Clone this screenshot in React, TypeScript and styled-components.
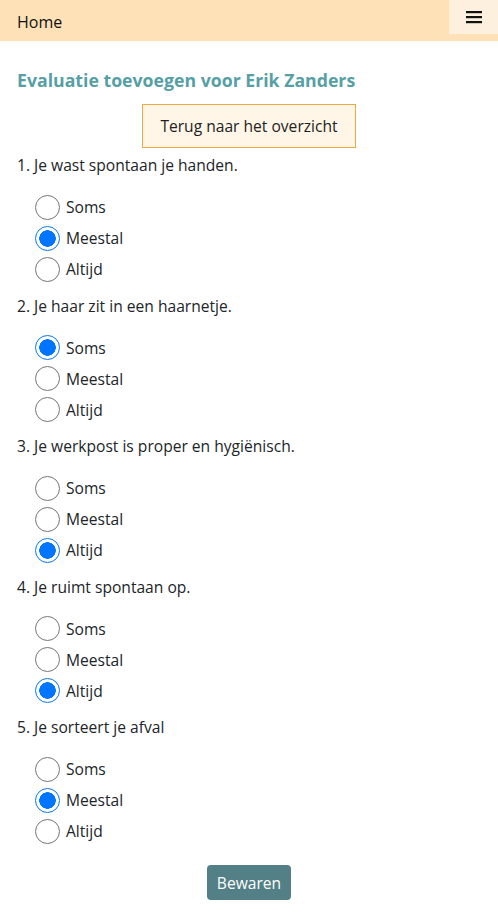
import React, { useState } from "react";
import styled, { createGlobalStyle } from "styled-components";

const Global = createGlobalStyle`
  html, body { margin: 0; padding: 0; background: #fff; }
  body { font-family: "Open Sans", "Noto Sans", sans-serif; color: #212529; font-size: 15.6px; }
  * { box-sizing: border-box; }
`;

const NavBar = styled.nav`
  display: flex;
  align-items: flex-start;
  justify-content: space-between;
  height: 41px;
  background: #ffe1b8;
`;

const NavLink = styled.a`
  padding: 12px 0 0 17px;
  font-size: 16px;
  line-height: 20px;
  color: #111;
  text-decoration: none;
`;

const MenuButton = styled.button`
  width: 49px;
  height: 34px;
  border: none;
  background: #fdf0df;
  display: flex;
  align-items: center;
  justify-content: center;
  padding: 0;
`;

const Main = styled.main`
  padding: 27px 17px 20px 17px;
  display: flex;
  flex-direction: column;
`;

const Title = styled.h1`
  margin: 0;
  font-size: 17.7px;
  line-height: 24px;
  font-weight: 700;
  color: #56a0a5;
`;

const BackButton = styled.button`
  align-self: center;
  margin: 12px 0 5px 0;
  height: 44px;
  padding: 0 17px;
  background: #fff6e8;
  border: 1px solid #f0a844;
  font-family: inherit;
  font-size: 15.6px;
  color: #222;
`;

const Question = styled.div`
  display: flex;
  flex-direction: column;
  margin-bottom: 9px;
`;

const QuestionText = styled.div`
  font-size: 15.6px;
  line-height: 24px;
  margin-bottom: 14.5px;
`;

const Options = styled.div`
  display: flex;
  flex-direction: column;
  padding-left: 18px;
`;

const OptionRow = styled.label`
  display: flex;
  align-items: center;
  gap: 6px;
  height: 31px;
  font-size: 15.6px;
`;

const Radio = styled.input`
  appearance: none;
  margin: 0;
  width: 25px;
  height: 25px;
  border-radius: 50%;
  border: 1px solid #767676;
  background: #fff;
  &:checked {
    border: 1.5px solid #0a75f0;
    background: radial-gradient(circle, #0075ff 0 8px, #fff 8.5px);
  }
`;

const SaveButton = styled.button`
  align-self: center;
  margin-top: 9.5px;
  height: 35px;
  padding: 0 10px;
  border: none;
  border-radius: 4px;
  background: #528086;
  color: #fff;
  font-family: inherit;
  font-size: 15.6px;
`;

const questions = [
  { text: "1. Je wast spontaan je handen.", value: "Meestal" },
  { text: "2. Je haar zit in een haarnetje.", value: "Soms" },
  { text: "3. Je werkpost is proper en hygiënisch.", value: "Altijd" },
  { text: "4. Je ruimt spontaan op.", value: "Altijd" },
  { text: "5. Je sorteert je afval", value: "Meestal" },
];

const choices = ["Soms", "Meestal", "Altijd"];

export default function App() {
  const [answers, setAnswers] = useState(questions.map((q) => q.value));
  return (
    <>
      <Global />
      <NavBar>
        <NavLink href="#">Home</NavLink>
        <MenuButton aria-label="menu">
          <svg width="16" height="14" viewBox="0 0 16 14">
            <rect x="0" y="1" width="16" height="2.2" fill="#111" />
            <rect x="0" y="6" width="16" height="2.2" fill="#111" />
            <rect x="0" y="11" width="16" height="2.2" fill="#111" />
          </svg>
        </MenuButton>
      </NavBar>
      <Main>
        <Title>Evaluatie toevoegen voor Erik Zanders</Title>
        <BackButton>Terug naar het overzicht</BackButton>
        {questions.map((q, i) => (
          <Question key={i} role="radiogroup">
            <QuestionText>{q.text}</QuestionText>
            <Options>
              {choices.map((c) => (
                <OptionRow key={c}>
                  <Radio
                    type="radio"
                    name={`q${i}`}
                    checked={answers[i] === c}
                    onChange={() =>
                      setAnswers((a) => a.map((v, j) => (j === i ? c : v)))
                    }
                  />
                  {c}
                </OptionRow>
              ))}
            </Options>
          </Question>
        ))}
        <SaveButton>Bewaren</SaveButton>
      </Main>
    </>
  );
}
